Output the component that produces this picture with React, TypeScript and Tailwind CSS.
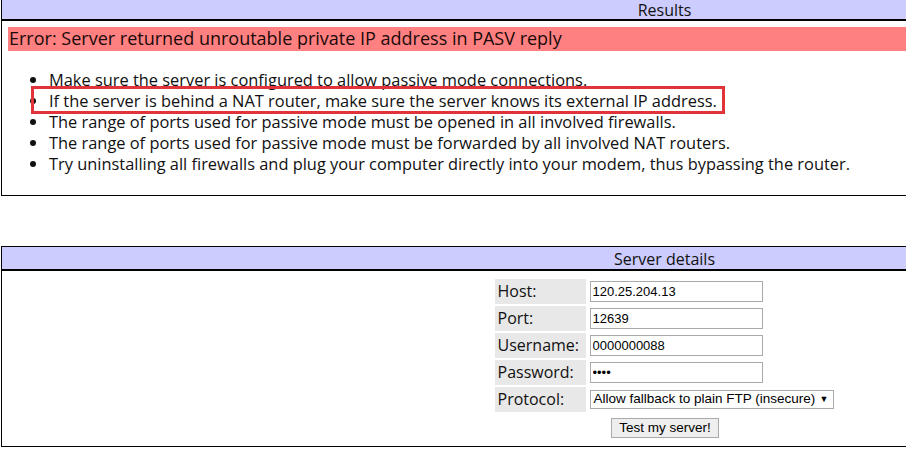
const TIPS = [
  "Make sure the server is configured to allow passive mode connections.",
  "If the server is behind a NAT router, make sure the server knows its external IP address.",
  "The range of ports used for passive mode must be opened in all involved firewalls.",
  "The range of ports used for passive mode must be forwarded by all involved NAT routers.",
  "Try uninstalling all firewalls and plug your computer directly into your modem, thus bypassing the router.",
];

const FIELDS = [
  { label: "Host:", value: "120.25.204.13", type: "text" },
  { label: "Port:", value: "12639", type: "text" },
  { label: "Username:", value: "0000000088", type: "text" },
  { label: "Password:", value: "1234", type: "password" },
];

const FONT = "font-['Segoe_UI','Open_Sans','Noto_Sans',sans-serif]";

export default function App() {
  return (
    <div className="w-[906px] h-[462px] overflow-hidden bg-white">
      <div className={`w-[1326px] ml-[1px] text-[16px] text-[#111] ${FONT}`}>
        {/* results */}
        <div className="relative border-l border-b border-black">
          <div className="h-[21px] bg-[#ccccff] border-b-2 border-black text-center leading-[21px]">
            Results
          </div>
          <div className="px-[6px] pt-[6px] pb-[5px]">
            <div className="h-[24px] bg-[#ff8080] pl-[1px] text-[18px] leading-[23px] text-[#1a0a0a]">
              Error: Server returned unroutable private IP address in PASV reply
            </div>
            <ul className="list-disc pl-[41px] mt-[18px] mb-[16px] text-[16.4px] leading-[21px]">
              {TIPS.map((tip) => (
                <li key={tip}>{tip}</li>
              ))}
            </ul>
          </div>
          <div className="absolute left-[29px] top-[86px] w-[694px] h-[28px] border-[3px] border-[#e2333b]" />
        </div>

        {/* server details */}
        <div className="mt-[50px] border-l border-t border-b border-black">
          <div className="h-[24px] bg-[#ccccff] border-b-2 border-black text-center leading-[24px]">
            Server details
          </div>
          <div className="flex justify-center pt-[6px] pb-[6px] pl-[1px]">
            <table className="border-separate border-spacing-[2px]">
              <tbody>
                {FIELDS.map((f) => (
                  <tr key={f.label}>
                    <td className="bg-[#e8e8e8] w-[91px] h-[25px] px-[3px] leading-[25px] whitespace-nowrap">
                      {f.label}
                    </td>
                    <td className="px-[2px]">
                      <input
                        type={f.type}
                        defaultValue={f.value}
                        className="block w-[173px] h-[21px] border border-[#a9a9a9] px-[2px] text-[13px] text-black font-['Liberation_Sans',Arial,sans-serif]"
                      />
                    </td>
                  </tr>
                ))}
                <tr>
                  <td className="bg-[#e8e8e8] h-[25px] px-[3px] leading-[25px]">Protocol:</td>
                  <td className="px-[2px]">
                    <div className="flex items-center w-[244px] h-[19px] border border-[#a9a9a9] px-[3px] text-[13.5px] text-black font-['Liberation_Sans',Arial,sans-serif]">
                      <span className="flex-1 whitespace-nowrap">Allow fallback to plain FTP (insecure)</span>
                      <span className="text-[9px] pr-[1px]">▼</span>
                    </div>
                  </td>
                </tr>
                <tr>
                  <td colSpan={2} className="text-center">
                    <button className="h-[20px] px-[7px] border border-[#a9a9a9] bg-[#eeeeee] text-[13.5px] text-black leading-[18px] font-['Liberation_Sans',Arial,sans-serif]">
                      Test my server!
                    </button>
                  </td>
                </tr>
              </tbody>
            </table>
          </div>
        </div>
      </div>
    </div>
  );
}
